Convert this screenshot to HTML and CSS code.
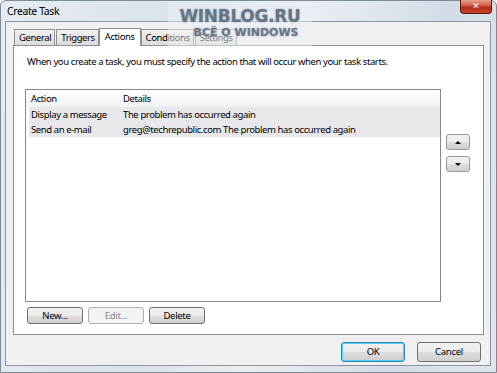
FILE: index.html
```html
<!DOCTYPE html>
<html lang="en">
<head>
  <meta charset="UTF-8">
  <title>Create Task</title>
  <link rel="stylesheet" href="styles.css">
</head>
<body>
  <div class="window">
    <div class="titlebar">
      <span class="title">Create Task</span>
      <button class="close-btn">&#x2715;</button>
    </div>

    <div class="client">
      <div class="tabstrip">
        <div class="tab">General</div>
        <div class="tab">Triggers</div>
        <div class="tab active">Actions</div>
        <div class="tab">Conditions</div>
        <div class="tab">Settings</div>
      </div>

      <div class="panel">
        <p class="intro">When you create a task, you must specify the action that will occur when your task starts.</p>

        <div class="list-area">
          <div class="listview">
            <div class="list-header">
              <span class="col-action">Action</span>
              <span class="col-details">Details</span>
            </div>
            <div class="list-row">
              <span class="col-action">Display a message</span>
              <span class="col-details">The problem has occurred again</span>
            </div>
            <div class="list-row">
              <span class="col-action">Send an e-mail</span>
              <span class="col-details">greg@techrepublic.com The problem has occurred again</span>
            </div>
          </div>

          <div class="move-buttons">
            <button class="btn btn-small"><span class="arrow-up"></span></button>
            <button class="btn btn-small"><span class="arrow-down"></span></button>
          </div>
        </div>

        <div class="list-buttons">
          <button class="btn">New...</button>
          <button class="btn" disabled>Edit...</button>
          <button class="btn">Delete</button>
        </div>
      </div>

      <div class="dialog-buttons">
        <button class="btn btn-default">OK</button>
        <button class="btn">Cancel</button>
      </div>
    </div>

    <!-- site watermark over the screenshot -->
    <div class="watermark">
      <div class="wm-big">WINBLOG.RU</div>
      <div class="wm-small">ВСЁ О WINDOWS</div>
    </div>
  </div>
</body>
</html>
```

FILE: styles.css
```css
html, body {
  margin: 0;
  padding: 0;
}

body {
  font-family: 'Noto Sans', sans-serif;
  font-size: 9.5px;
  letter-spacing: -0.4px;
  color: #000;
  background: #fff;
}

.window {
  position: relative;
  width: 497px;
  height: 373px;
  box-sizing: border-box;
  border: 1px solid #7d8a98;
  border-radius: 6px 6px 0 0;
  background: linear-gradient(100deg, #e6ecf1 0%, #d9e1ea 35%, #ebeff4 55%, #d3dce6 80%, #dfe6ed 100%);
  display: flex;
  flex-direction: column;
}

.titlebar {
  height: 20px;
  display: flex;
  justify-content: space-between;
  align-items: flex-start;
  padding-left: 6px;
  padding-right: 4px;
}

.title {
  font-size: 10.5px;
  line-height: 20px;
  color: #000;
}

.close-btn {
  width: 32px;
  height: 14px;
  margin-top: -1px;
  padding: 0;
  border: 1px solid #5b1b14;
  border-top: none;
  border-radius: 0 0 4px 4px;
  background: linear-gradient(#e8a493 0%, #d1563e 45%, #b32d17 55%, #c8452b 100%);
  color: #fff;
  font-size: 9px;
  font-weight: bold;
  line-height: 13px;
  letter-spacing: 0;
  font-family: 'DejaVu Sans', sans-serif;
}

.client {
  flex: 1;
  margin: 0 5px 6px 4px;
  border: 1px solid #8c96a0;
  background: #f0f0f0;
  padding: 6px 6px 0 7px;
  display: flex;
  flex-direction: column;
}

.tabstrip {
  display: flex;
  height: 17px;
  align-items: flex-end;
  padding-left: 1px;
  position: relative;
  z-index: 1;
}

.tab {
  height: 16px;
  box-sizing: border-box;
  padding: 0 3px 0 4px;
  margin-right: 1px;
  border: 1px solid #8e8f8f;
  border-bottom: none;
  background: linear-gradient(#f2f2f2, #dcdcdc);
  line-height: 15px;
}

.tab.active {
  height: 18px;
  margin: 0 0 -1px -1px;
  padding: 0 5px;
  background: #fff;
  line-height: 16px;
}

.panel {
  height: 290px;
  box-sizing: border-box;
  border: 1px solid #8e8f8f;
  background: #fff;
  padding: 9px 13px 0 11px;
}

.intro {
  margin: 0 0 20px 2px;
  line-height: 14px;
}

.list-area {
  display: flex;
  align-items: flex-start;
}

.listview {
  width: 417px;
  height: 213px;
  box-sizing: border-box;
  border: 1px solid #828790;
  padding-left: 3px;
}

.list-header,
.list-row {
  display: flex;
  height: 15px;
  line-height: 15px;
  padding-left: 2px;
}

.list-header {
  height: 17px;
  line-height: 17px;
  margin-left: -3px;
  padding-left: 5px;
  background: linear-gradient(#fff, #f1f2f4);
}

.list-row {
  background: #e8e8ec;
}

.col-action {
  width: 92px;
}

.move-buttons {
  display: flex;
  flex-direction: column;
  gap: 6px;
  margin: 45px 0 0 5px;
}

.btn {
  font-family: 'Noto Sans', sans-serif;
  font-size: 9.5px;
  letter-spacing: -0.3px;
  width: 56px;
  height: 17px;
  padding: 0;
  border: 1px solid #707070;
  border-radius: 3px;
  background: linear-gradient(#f2f2f2 0%, #ebebeb 50%, #dddddd 51%, #cfcfcf 100%);
  color: #000;
  line-height: 15px;
}

.btn:disabled {
  border-color: #adb2b5;
  background: #f4f4f4;
  color: #838383;
}

.btn-small {
  width: 24px;
  height: 16px;
  display: flex;
  align-items: center;
  justify-content: center;
  border-color: #9a9a9a;
}

.arrow-up,
.arrow-down {
  width: 0;
  height: 0;
  border-left: 3px solid transparent;
  border-right: 3px solid transparent;
}

.arrow-up {
  border-bottom: 3px solid #000;
}

.arrow-down {
  border-top: 3px solid #000;
}

.list-buttons {
  display: flex;
  gap: 5px;
  margin: 5px 0 0 2px;
}

.dialog-buttons {
  display: flex;
  justify-content: flex-end;
  gap: 12px;
  padding: 7px 3px 0 0;
}

.dialog-buttons .btn {
  width: 64px;
  height: 20px;
  line-height: 18px;
}

.btn-default {
  border-color: #3c7fb1;
  box-shadow: inset 0 0 0 1px #48d5fd;
}

.watermark {
  position: absolute;
  z-index: 2;
  left: 167px;
  top: 0;
  width: 144px;
  height: 45px;
  background: rgba(235, 240, 245, 0.5);
  color: rgba(85, 100, 116, 0.75);
  text-align: center;
  font-family: 'DejaVu Sans', sans-serif;
  font-weight: bold;
  letter-spacing: 0;
  pointer-events: none;
}

.wm-big {
  font-size: 17px;
  line-height: 20px;
  margin-top: 5px;
  letter-spacing: -0.3px;
  text-shadow: 0 0 2px #8d99a6;
}

.wm-small {
  font-size: 11px;
  line-height: 14px;
  margin-left: 12px;
  text-shadow: 0 0 2px #8d99a6;
}
```
